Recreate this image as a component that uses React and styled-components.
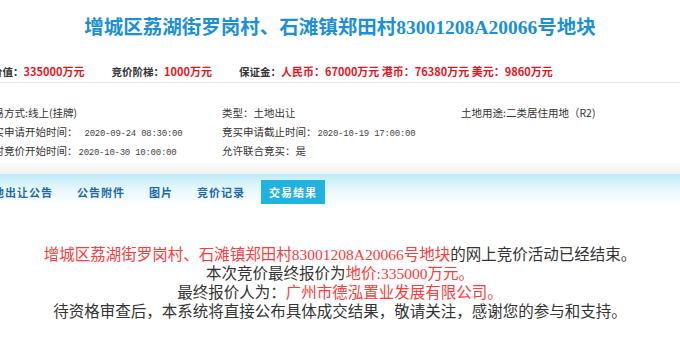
import React from "react";
import styled, { createGlobalStyle } from "styled-components";

const CJK = `"Noto Sans CJK SC", sans-serif`;
const SERIF = `"Liberation Serif", "Noto Sans CJK SC", serif`;
const RED = "#e8141c";
const SOFT_RED = "#ff3b3b";

const GlobalStyle = createGlobalStyle`
  html, body {
    margin: 0;
    padding: 0;
    background: #ffffff;
    overflow: hidden;
  }
  body {
    width: 680px;
    height: 340px;
  }
`;

const info = [
  [
    { label: "交易方式:", value: "线上(挂牌)" },
    { label: "类型：", value: "土地出让" },
    { label: "土地用途:", value: "二类居住用地（R2)" },
  ],
  [
    { label: "竞买申请开始时间：", date: "2020-09-24 08:30:00", gap: 7 },
    { label: "竞买申请截止时间：", date: "2020-10-19 17:00:00", gap: 1 },
  ],
  [
    { label: "限时竞价开始时间：", date: "2020-10-30 10:00:00", gap: 1 },
    { label: "允许联合竞买：", value: "是" },
  ],
];

const tabs = ["土地出让公告", "公告附件", "图片", "竞价记录", "交易结果"];

const App = () => {
  return (
    <>
      <GlobalStyle />
      <Page>
        <Title>增城区荔湖街罗岗村、石滩镇郑田村83001208A20066号地块</Title>

        <PriceBar>
          <PriceItem>
            起始价值：<Money>335000万元</Money>
          </PriceItem>
          <PriceItem>
            竞价阶梯：<Money>1000万元</Money>
          </PriceItem>
          <PriceItem>
            保证金：
            <Money>人民币：67000万元 港币：76380万元 美元：9860万元</Money>
          </PriceItem>
        </PriceBar>

        <InfoGrid>
          {info.map((row, i) => (
            <React.Fragment key={i}>
              {row.map((cell, j) => (
                <InfoCell key={j}>
                  {cell.label}
                  {cell.value}
                  {cell.date && <DateText $gap={cell.gap}>{cell.date}</DateText>}
                </InfoCell>
              ))}
              {row.length < 3 && <InfoCell />}
            </React.Fragment>
          ))}
        </InfoGrid>

        <Strip />

        <TabBar>
          {tabs.map((t, i) => (
            <Tab key={t} $active={i === tabs.length - 1}>
              {t}
            </Tab>
          ))}
        </TabBar>

        <Message>
          <Line>
            <Hl>增城区荔湖街罗岗村、石滩镇郑田村83001208A20066号地块</Hl>
            的网上竞价活动已经结束。
          </Line>
          <Line>
            本次竞价最终报价为<Hl>地价:335000万元。</Hl>
          </Line>
          <Line>
            最终报价人为：<Hl>广州市德泓置业发展有限公司。</Hl>
          </Line>
          <Line>
            待资格审查后，本系统将直接公布具体成交结果，敬请关注，感谢您的参与和支持。
          </Line>
        </Message>
      </Page>
    </>
  );
};

export default App;

const Page = styled.div`
  width: 680px;
  display: flex;
  flex-direction: column;
`;

const Title = styled.h1`
  height: 55px;
  margin: 0;
  line-height: 55px;
  text-align: center;
  font-family: ${SERIF};
  font-size: 19.5px;
  font-weight: 700;
  color: #1c90d6;
  white-space: nowrap;
`;

const PriceBar = styled.div`
  display: flex;
  gap: 27px;
  height: 28px;
  padding-top: 4px;
  box-sizing: border-box;
  margin-left: -29px;
  width: 709px;
  line-height: 24px;
  border-bottom: 1px solid #e6e6e6;
  font-family: ${CJK};
  font-size: 10.5px;
  font-weight: 700;
  color: #333333;
  white-space: nowrap;
`;

const PriceItem = styled.span``;

const Money = styled.span`
  font-size: 11px;
  color: ${RED};
`;

const InfoGrid = styled.div`
  display: grid;
  grid-template-columns: repeat(3, 239px);
  grid-auto-rows: 19px;
  margin-left: -17px;
  padding-top: 20px;
  font-family: ${CJK};
  font-size: 10.5px;
  color: #333333;
`;

const InfoCell = styled.div`
  line-height: 19px;
  white-space: nowrap;
`;

const DateText = styled.span`
  margin-left: ${(p) => p.$gap}px;
  font-family: "Liberation Mono", monospace;
  font-size: 9px;
  letter-spacing: -0.25px;
  color: #444444;
`;

const Strip = styled.div`
  height: 11px;
  margin-top: 3px;
  background: linear-gradient(#fbfbf9, #f1f2ee);
`;

const TabBar = styled.div`
  display: flex;
  align-items: flex-end;
  gap: 8px;
  height: 31px;
  padding: 6px 0 1px;
  box-sizing: border-box;
  margin-left: -27px;
  width: 707px;
  background: linear-gradient(#bdeaf8 0%, #e4f7fc 45%, #ffffff 100%);
`;

const Tab = styled.div`
  height: 24px;
  padding: 0 8px;
  line-height: 24px;
  font-family: ${CJK};
  font-size: 11px;
  font-weight: 700;
  letter-spacing: 1px;
  white-space: nowrap;
  color: ${(p) => (p.$active ? "#ffffff" : "#1b69ad")};
  background: ${(p) => (p.$active ? "#21b3df" : "transparent")};
`;

const Message = styled.div`
  margin-top: 40px;
  text-align: center;
  font-family: ${SERIF};
  font-size: 15.5px;
  line-height: 19px;
  color: #333333;
`;

const Line = styled.div`
  white-space: nowrap;
`;

const Hl = styled.span`
  color: ${SOFT_RED};
`;
